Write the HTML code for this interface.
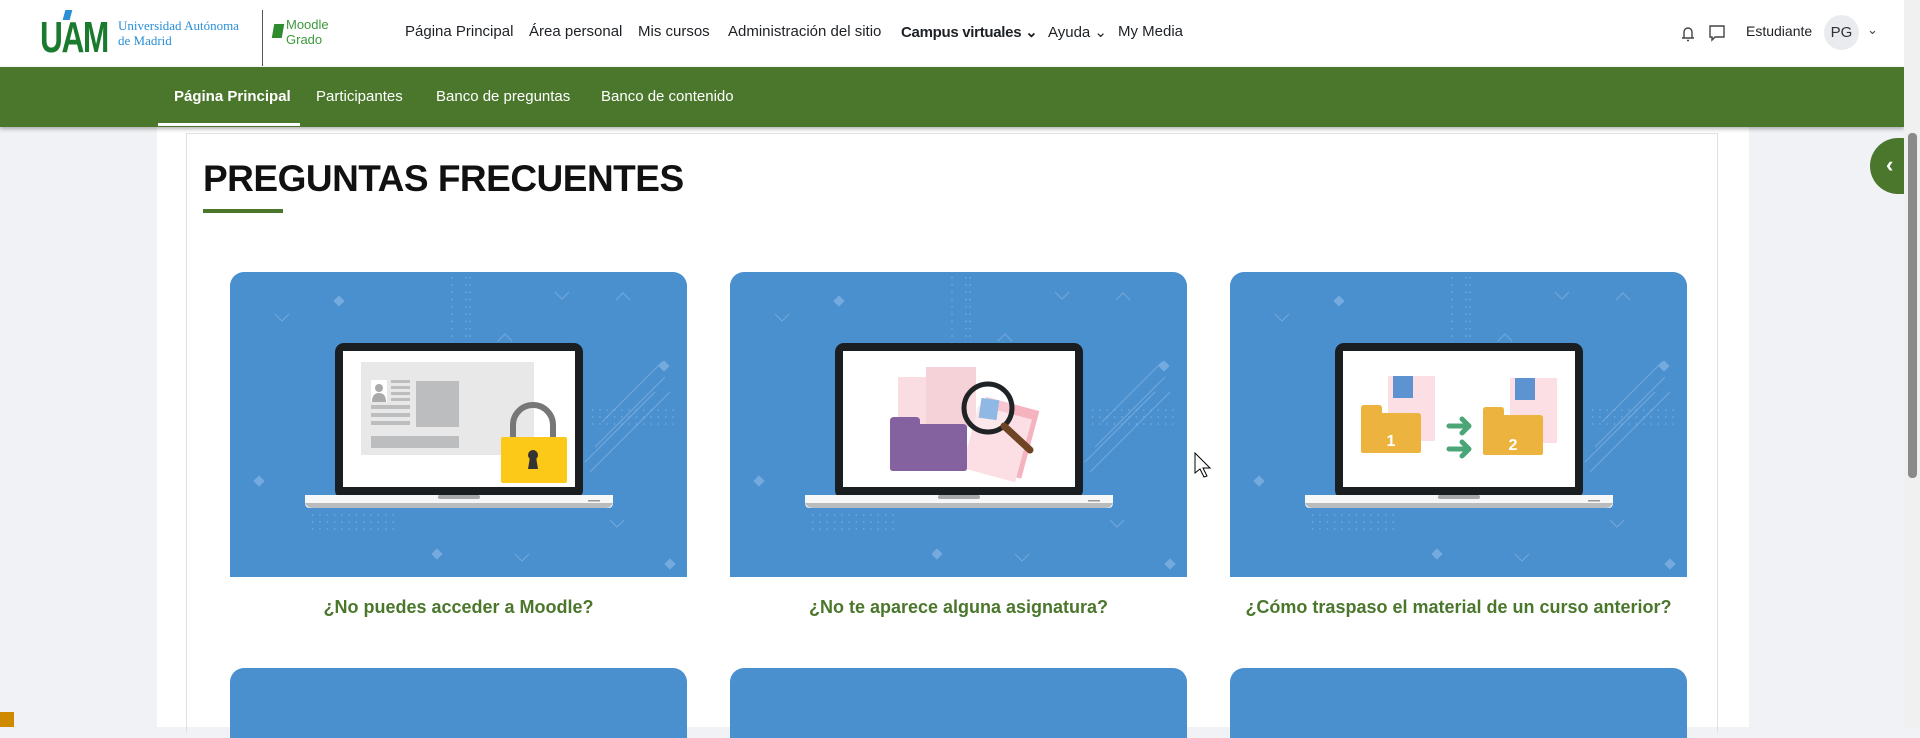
<!DOCTYPE html>
<html><head><meta charset="utf-8"><style>
*{box-sizing:border-box;margin:0;padding:0}
body{width:1920px;height:727px;overflow:hidden;background:#f0f2f5;font-family:"Liberation Sans",sans-serif;position:relative}
.abs{position:absolute}
.hdr{left:0;top:0;width:1904px;height:67px;background:#fff}
.nav a{position:absolute;top:23px;font-size:15px;color:#1d2125;white-space:nowrap}
.sub{left:0;top:67px;width:1904px;height:60px;background:#4b772c;box-shadow:0 2px 4px rgba(0,0,0,.3)}
.sub span{position:absolute;top:21px;color:#fff;font-size:15px;white-space:nowrap}
.title{position:absolute;top:597px;width:457px;text-align:center;color:#4b772c;font-weight:bold;font-size:18px}
</style></head><body>
<div class="abs" style="left:157px;top:127px;width:1592px;height:600px;background:#fff"></div>
<div class="abs" style="left:186px;top:133px;width:1532px;height:600px;border-left:1px solid #dee2e6;border-right:1px solid #dee2e6;border-top:1px solid #dee2e6"></div>

<div class="abs hdr"></div>
<div class="abs" style="left:40px;top:15px;font-size:44px;font-weight:bold;color:#1a7a2e;letter-spacing:-2px;line-height:46px;transform:scaleX(0.72);transform-origin:left top">UAM</div>
<div class="abs" style="left:64px;top:10px;width:7px;height:10px;background:#2a8fd6;transform:skewX(-15deg)"></div>
<div class="abs" style="left:118px;top:18px;font-family:'Liberation Serif',serif;color:#2a8fd6;font-size:13px;line-height:15px">Universidad Autónoma<br>de Madrid</div>
<div class="abs" style="left:262px;top:10px;width:1px;height:56px;background:#555"></div>
<div class="abs" style="left:273px;top:24px;width:10px;height:14px;background:#2e8b2e;transform:skewX(-10deg)"></div>
<div class="abs" style="left:286px;top:17px;color:#3c9a3c;font-size:13px;line-height:15px">Moodle<br>Grado</div>

<div class="nav">
<a style="left:405px">Página Principal</a>
<a style="left:529px">Área personal</a>
<a style="left:638px">Mis cursos</a>
<a style="left:728px">Administración del sitio</a>
<a style="left:901px;font-weight:bold;letter-spacing:-0.3px">Campus virtuales ⌄</a>
<a style="left:1048px">Ayuda ⌄</a>
<a style="left:1118px">My Media</a>
</div>
<svg class="abs" style="left:1678px;top:22px" width="60" height="22" viewBox="0 0 60 22">
<path d="M4 16h12M6 16v-6a4 4 0 0 1 8 0v6M9 18.5h2" stroke="#444" stroke-width="1.4" fill="none"/>
<path d="M32 4h14v11h-9l-3 3v-3h-2z" stroke="#444" stroke-width="1.4" fill="none"/>
</svg>
<div class="abs" style="left:1746px;top:23px;font-size:14px;color:#1d2125">Estudiante</div>
<div class="abs" style="left:1824px;top:15px;width:35px;height:35px;border-radius:50%;background:#e9ebef;font-size:15px;color:#333;text-align:center;line-height:35px">PG</div>
<div class="abs" style="left:1867px;top:22px;font-size:13px;color:#444">⌄</div>

<div class="abs sub">
<span style="left:174px;font-weight:bold">Página Principal</span>
<div class="abs" style="left:158px;top:56px;width:142px;height:3px;background:#fff"></div>
<span style="left:316px">Participantes</span>
<span style="left:436px">Banco de preguntas</span>
<span style="left:601px">Banco de contenido</span>
</div>

<div class="abs" style="left:1870px;top:138px;width:60px;height:56px;border-radius:28px;background:#4b772c;color:#fff;font-size:22px;font-weight:bold;line-height:54px;padding-left:16px">‹</div>
<div class="abs" style="left:1904px;top:0;width:16px;height:727px;background:#f0f0f0"></div>
<div class="abs" style="left:1908px;top:133px;width:9px;height:345px;background:#8a8a8a;border-radius:4px"></div>
<div class="abs" style="left:0;top:712px;width:14px;height:15px;background:#d08a00"></div>

<div class="abs" style="left:203px;top:158px;font-size:37px;font-weight:bold;color:#111;letter-spacing:-0.5px">PREGUNTAS FRECUENTES</div>
<div class="abs" style="left:203px;top:209px;width:80px;height:4px;background:#4b772c"></div>

<svg width="0" height="0" style="position:absolute"><defs>
<g id="lap">
<rect width="457" height="305" rx="14" fill="#4a90cf"/>
<rect x="0" y="290" width="457" height="15" fill="#4a90cf"/>
<g fill="none" stroke="#7fb1e0" stroke-width="1.2" opacity=".7">
<path d="M45 42l7 7 7-7M325 20l7 7 7-7M386 28l7-7 7 7M268 69l7-7 7 7M380 248l7 7 7-7M285 282l7 7 7-7"/>
<path d="M355 190l70-70M360 200l80-80M365 175l70-70M372 150l60-60"/>
</g>
<g fill="#7fb1e0" opacity=".8"><rect x="105" y="25" width="8" height="8" transform="rotate(45 109 29)"/><rect x="25" y="205" width="8" height="8" transform="rotate(45 29 209)"/><rect x="430" y="90" width="8" height="8" transform="rotate(45 434 94)"/><rect x="203" y="278" width="8" height="8" transform="rotate(45 207 282)"/><rect x="436" y="288" width="8" height="8" transform="rotate(45 440 292)"/></g>
<g stroke="#8ab8e4" stroke-width="1.3" stroke-dasharray="1.3 6" opacity=".8">
<path d="M222 5v70M236 5v70M240 5v70M362 138h85M362 145h85M362 152h85M82 243h85M82 250h85M82 257h85"/>
</g>
<rect x="105" y="71" width="248" height="156" rx="9" fill="#1b1e21"/>
<rect x="113" y="79" width="232" height="136" fill="#fff"/>
<path d="M75 223h308v8q0 5-5 5H80q-5 0-5-5z" fill="#f7f7f7"/>
<path d="M75 231h308q-2 5-8 5H83q-6 0-8-5z" fill="#b9bcbf"/>
<rect x="208" y="223" width="42" height="4" rx="2" fill="#a7a9ac"/>
<rect x="358" y="228" width="12" height="1.5" fill="#999"/>
</g></defs></svg>

<svg class="abs" style="left:230px;top:272px" width="457" height="305" viewBox="0 0 457 305">
<use href="#lap"/>
<rect x="131" y="90" width="173" height="93" fill="#e8e8e8"/>
<rect x="141" y="108" width="16" height="22" fill="#fff"/><circle cx="149" cy="116" r="4" fill="#aaa"/><path d="M142 130q0-9 7-9t7 9z" fill="#aaa"/>
<g fill="#bcbdbf"><rect x="161" y="108" width="19" height="3"/><rect x="161" y="114" width="19" height="3"/><rect x="161" y="120" width="19" height="3"/><rect x="161" y="126" width="19" height="3"/><rect x="141" y="133" width="39" height="4"/><rect x="141" y="141" width="39" height="4"/><rect x="141" y="149" width="39" height="4"/><rect x="186" y="109" width="43" height="46"/><rect x="141" y="164" width="88" height="12"/></g>
<path d="M283 166v-13a20 20 0 0 1 40 0v13" stroke="#777" stroke-width="6" fill="none"/>
<rect x="271" y="165" width="66" height="46" rx="2" fill="#fcc919"/>
<circle cx="303" cy="183" r="5" fill="#333"/><path d="M300 185l-2 12h10l-2-12z" fill="#333"/>
</svg>
<div class="title" style="left:230px">¿No puedes acceder a Moodle?</div>

<svg class="abs" style="left:730px;top:272px" width="457" height="305" viewBox="0 0 457 305">
<use href="#lap"/>
<rect x="168" y="105" width="30" height="50" fill="#f9dde2"/>
<rect x="196" y="95" width="50" height="60" fill="#f4d2d8"/>
<g transform="rotate(15 270 170)"><rect x="245" y="130" width="55" height="70" fill="#f5b3c0"/><rect x="240" y="140" width="55" height="65" fill="#fbdfe4"/></g>
<path d="M160 149q0-4 4-4h22q4 0 4 4v3h43q4 0 4 4v40q0 3-3 3h-71q-3 0-3-3z" fill="#8462a0"/>
<rect x="250" y="127" width="18" height="20" fill="#6aa0dc" transform="rotate(8 259 137)"/>
<circle cx="258" cy="136" r="24" fill="rgba(255,255,255,.25)" stroke="#1f2326" stroke-width="5"/>
<path d="M274 154l26 24" stroke="#6e4424" stroke-width="7" stroke-linecap="round"/>
</svg>
<div class="title" style="left:730px">¿No te aparece alguna asignatura?</div>

<svg class="abs" style="left:1230px;top:272px" width="457" height="305" viewBox="0 0 457 305">
<use href="#lap"/>
<rect x="158" y="104" width="47" height="65" fill="#fbdfe4"/>
<rect x="163" y="104" width="20" height="22" fill="#5e93d1"/>
<rect x="280" y="106" width="47" height="65" fill="#fbdfe4"/>
<rect x="285" y="106" width="20" height="22" fill="#5e93d1"/>
<path d="M131 136q0-3 3-3h15q3 0 3 3v5h36q3 0 3 3v35q0 2-2 2h-56q-2 0-2-2z" fill="#ecb33e"/>
<text x="161" y="174" font-family="Liberation Sans" font-weight="bold" font-size="16" fill="#fff" text-anchor="middle">1</text>
<path d="M253 138q0-3 3-3h15q3 0 3 3v5h36q3 0 3 3v35q0 2-2 2h-56q-2 0-2-2z" fill="#ecb33e"/>
<text x="283" y="178" font-family="Liberation Sans" font-weight="bold" font-size="16" fill="#fff" text-anchor="middle">2</text>
<path d="M219 154h20M232 147l7 7-7 7M219 177h20M232 170l7 7-7 7" stroke="#4aa677" stroke-width="5" fill="none" stroke-linecap="round" stroke-linejoin="round"/>
</svg>
<div class="title" style="left:1230px">¿Cómo traspaso el material de un curso anterior?</div>

<div class="abs" style="left:230px;top:668px;width:457px;height:70px;background:#4a90cf;border-radius:14px 14px 0 0"></div>
<div class="abs" style="left:730px;top:668px;width:457px;height:70px;background:#4a90cf;border-radius:14px 14px 0 0"></div>
<div class="abs" style="left:1230px;top:668px;width:457px;height:70px;background:#4a90cf;border-radius:14px 14px 0 0"></div>

<svg class="abs" style="left:1194px;top:452px" width="20" height="28" viewBox="0 0 20 28"><path d="M1 1v20l5-4 4 8 3-1-4-8h7z" fill="#fff" stroke="#000" stroke-width="1"/></svg>
</body></html>
